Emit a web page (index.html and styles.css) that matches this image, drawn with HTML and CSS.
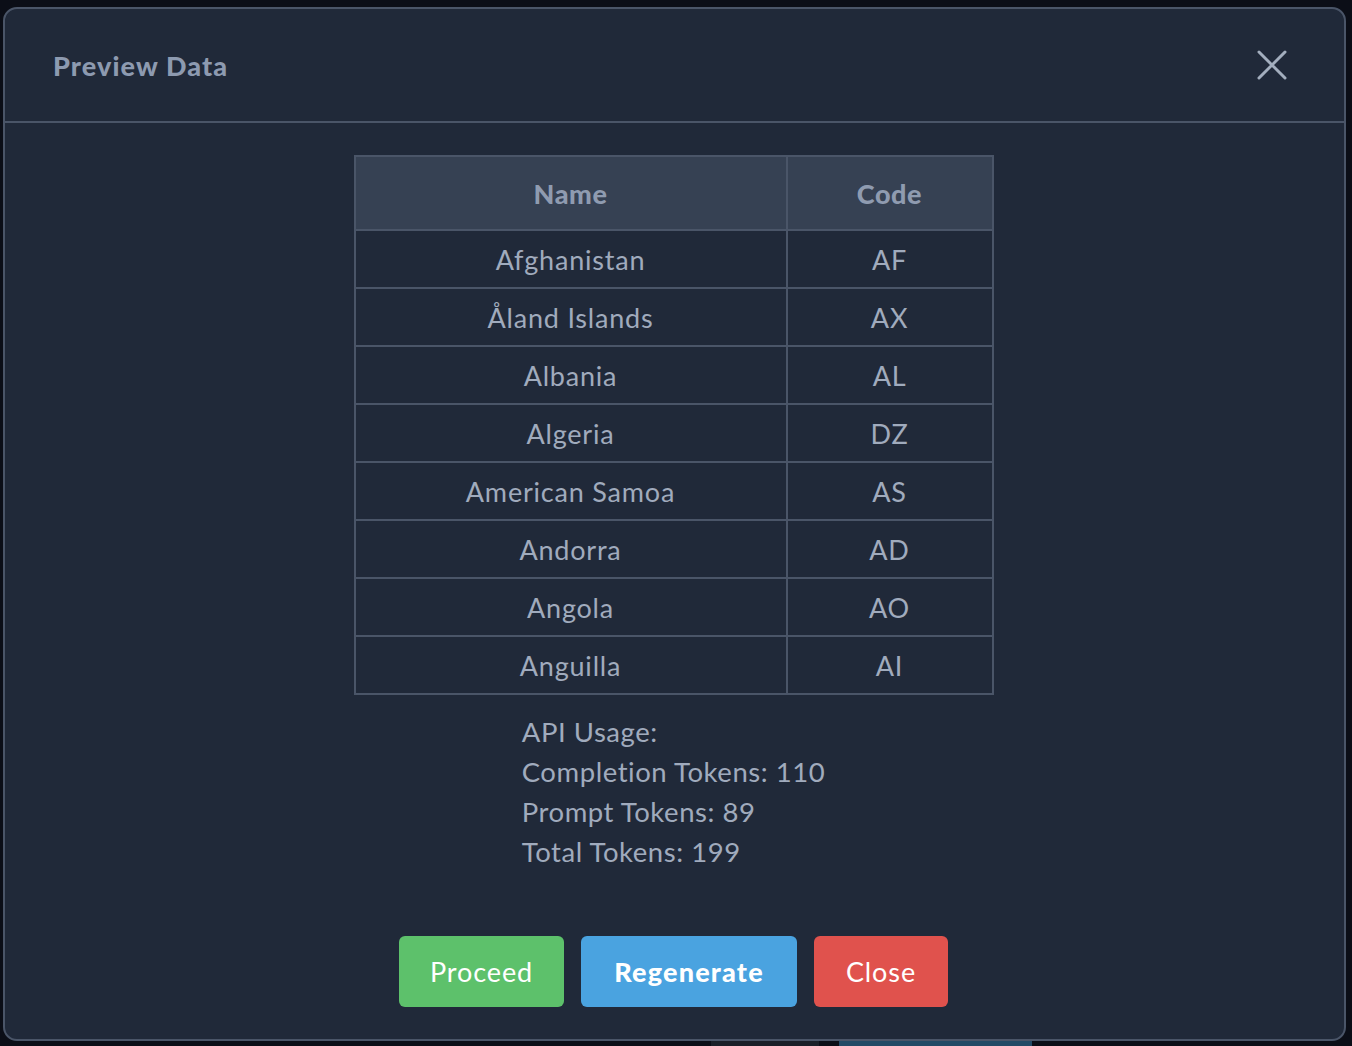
FILE: index.html
```html
<!DOCTYPE html>
<html lang="en">
<head>
<meta charset="utf-8">
<title>Preview Data</title>
<link rel="stylesheet" href="styles.css">
</head>
<body>
<div class="backdrop">
  <div class="bg-strip bg-strip-a"></div>
  <div class="bg-strip bg-strip-b"></div>
  <div class="modal">
    <div class="modal-header">
      <h2 class="modal-title">Preview Data</h2>
      <button class="icon-close" aria-label="Close">
        <svg width="32" height="32" viewBox="0 0 32 32"><path d="M3 3 L29 29 M29 3 L3 29" stroke="#a3aebe" stroke-width="3" stroke-linecap="round" fill="none"/></svg>
      </button>
    </div>
    <div class="modal-body">
      <table class="data-table">
        <thead>
          <tr><th class="col-name">Name</th><th class="col-code">Code</th></tr>
        </thead>
        <tbody>
          <tr><td>Afghanistan</td><td>AF</td></tr>
          <tr><td>Åland Islands</td><td>AX</td></tr>
          <tr><td>Albania</td><td>AL</td></tr>
          <tr><td>Algeria</td><td>DZ</td></tr>
          <tr><td>American Samoa</td><td>AS</td></tr>
          <tr><td>Andorra</td><td>AD</td></tr>
          <tr><td>Angola</td><td>AO</td></tr>
          <tr><td>Anguilla</td><td>AI</td></tr>
        </tbody>
      </table>
      <div class="usage">
        <div>API Usage:</div>
        <div>Completion Tokens: 110</div>
        <div>Prompt Tokens: 89</div>
        <div>Total Tokens: 199</div>
      </div>
      <div class="actions">
        <button class="btn btn-green">Proceed</button>
        <button class="btn btn-blue">Regenerate</button>
        <button class="btn btn-red">Close</button>
      </div>
    </div>
  </div>
</div>
</body>
</html>
```

FILE: styles.css
```css
* { box-sizing: border-box; }
html, body { margin: 0; padding: 0; }
body {
  background: #0b0e17;
  font-family: "Lato", "Noto Sans", sans-serif;
  width: 1352px;
  height: 1046px;
  overflow: hidden;
}
.backdrop {
  position: relative;
  width: 1352px;
  height: 1046px;
  padding: 7px 0 0 3px;
}
.bg-strip { position: absolute; bottom: 0; height: 5px; }
.bg-strip-a { left: 711px; width: 108px; background: #1a1f28; }
.bg-strip-b { left: 839px; width: 193px; background: #234a66; }
.modal {
  position: relative;
  width: 1343px;
  height: 1034px;
  background: #202939;
  border: 2px solid #4a5568;
  border-radius: 14px;
  display: flex;
  flex-direction: column;
}
.modal-header {
  height: 114px;
  border-bottom: 2px solid #4a5568;
  display: flex;
  align-items: center;
  justify-content: space-between;
  padding: 0 56px 0 48px;
}
.modal-title {
  margin: 0;
  font-size: 27px;
  font-weight: 900;
  color: #8d9ab0;
  letter-spacing: 1.1px;
}
.icon-close {
  background: none;
  border: 0;
  padding: 0;
  width: 32px;
  height: 32px;
  display: flex;
}
.modal-body {
  padding: 32px 2px 0 0;
  display: flex;
  flex-direction: column;
  align-items: center;
  flex: 1;
}
.data-table {
  border-collapse: collapse;
  border: 2px solid #4a5568;
  color: #a0abbd;
  font-size: 27px;
  letter-spacing: 0.8px;
}
.data-table th, .data-table td {
  border: 2px solid #4a5568;
  text-align: center;
  padding: 0;
}
.data-table th {
  background: #364153;
  height: 74px;
  font-weight: 900;
  color: #8f9bb0;
  letter-spacing: 0.6px;
}
.col-name { width: 432px; }
.col-code { width: 206px; }
.data-table td { height: 58px; }
.usage {
  margin-top: 17px;
  color: #a0abbd;
  font-size: 27.5px;
  line-height: 40px;
  letter-spacing: 0.55px;
  text-align: left;
}
.actions {
  margin-top: 64px;
  display: flex;
  gap: 17px;
}
.btn {
  height: 71px;
  border: 0;
  border-radius: 6px;
  color: #fff;
  font-family: inherit;
  font-size: 27px;
  letter-spacing: 0.9px;
  padding: 0;
}
.btn-green { background: #5dc16b; width: 165px; }
.btn-blue { background: #4aa3e0; width: 216px; font-weight: 900; letter-spacing: 1.2px; }
.btn-red { background: #e0524d; width: 134px; }
```
